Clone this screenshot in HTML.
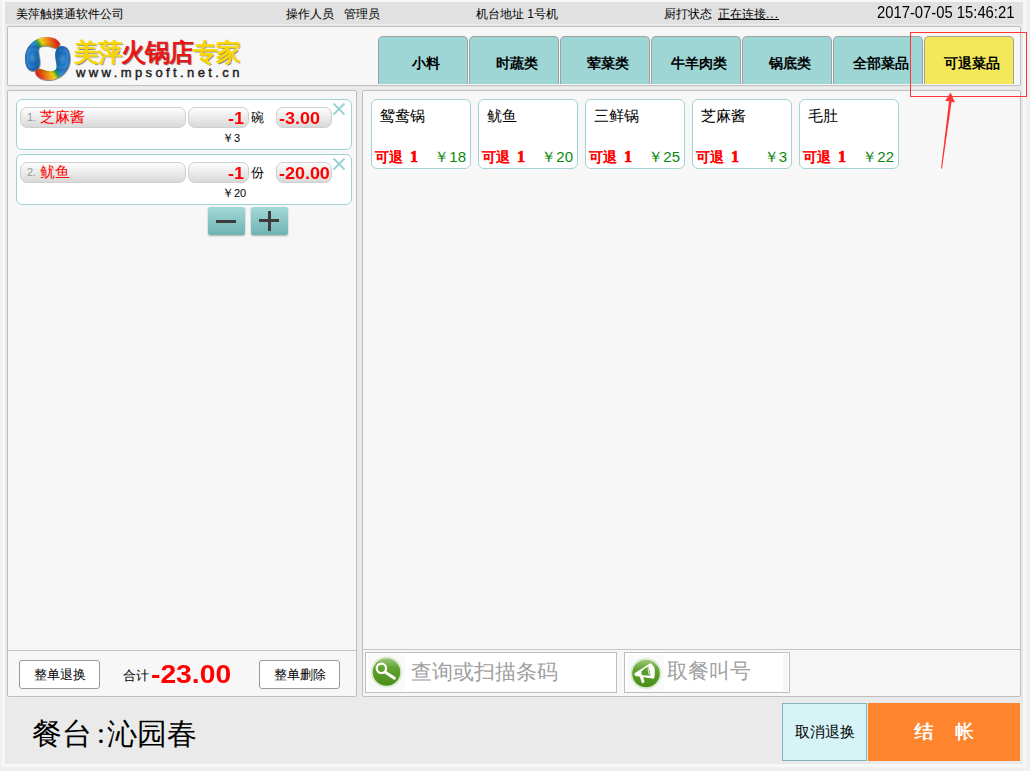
<!DOCTYPE html>
<html><head><meta charset="utf-8">
<style>
*{box-sizing:border-box;margin:0;padding:0}
html,body{width:1030px;height:771px;overflow:hidden;background:#f0f0f0;font-family:"Liberation Sans",sans-serif;color:#000}
.a{position:absolute}
#frame{left:2px;top:0;width:1024px;height:767px;background:#f7f7f7}
#inner{left:5px;top:2px;width:1018px;height:762px;background:#eaeaea}
#hbar{left:5px;top:2px;width:1018px;height:22px;background:#e1e1e1}
.ht{font-size:12px;line-height:14px;top:7px;white-space:nowrap}
.panel{background:#f7f7f7;border:1px solid #bebebe;border-radius:2px}
.tab{top:36px;width:90px;height:48px;background:#9ed6d6;border:1px solid #a0a0a0;border-bottom:none;border-radius:5px 5px 0 0;font-size:13.5px;font-weight:bold;text-align:center;line-height:54px;text-indent:6px}
.card{background:#fff;border:1px solid #a0d1d1;border-radius:6px}
.pill{background:linear-gradient(#fdfdfd,#e9e9e9 55%,#d9d9d9);border:1px solid #cfcfcf;border-radius:7px}
.red{color:#ff0000}
.dish{top:99px;width:100px;height:70px;background:#fff;border:1px solid #a5d3d3;border-radius:6px}
.dn{left:8px;top:8px;font-size:15px;line-height:16px;white-space:nowrap}
.dr{left:3px;top:50px;font-size:14px;line-height:14px;font-weight:bold;color:#ff0000;white-space:nowrap;text-shadow:0.35px 0 0 rgba(255,0,0,.5)}.dr b{font-family:"Liberation Serif",serif;font-size:16px;margin-left:7px;-webkit-text-stroke:0.6px #ff0000}
.dp{right:4px;top:50px;font-size:15px;line-height:14px;color:#0b870b;white-space:nowrap}
.btn{background:#fff;border:1px solid #9a9a9a;border-radius:3px;font-size:13px;text-align:center;line-height:27px}
</style></head><body>
<div class="a" id="frame"></div>
<div class="a" id="inner"></div>
<div class="a" id="hbar"></div>
<div class="a ht" style="left:16px">美萍触摸通软件公司</div>
<div class="a ht" style="left:286px">操作人员&nbsp;&nbsp;&nbsp;管理员</div>
<div class="a ht" style="left:476px">机台地址 1号机</div>
<div class="a ht" style="left:664px">厨打状态<span style="text-decoration:underline;margin-left:6px">正在连接<span style="letter-spacing:1px">...</span></span></div>
<div class="a ht" style="left:877px;font-size:16px;line-height:17px;top:4px;transform:scaleX(0.925);transform-origin:0 0">2017-07-05 15:46:21</div>

<!-- header panel -->
<div class="a panel" style="left:7px;top:26px;width:1014px;height:60px"></div>
<svg class="a" style="left:24px;top:36px" width="48" height="46" viewBox="-1 -1 48 46">
<defs>
<linearGradient id="lg" x1="4" y1="22" x2="34" y2="4" gradientUnits="userSpaceOnUse">
<stop offset="0" stop-color="#1670c6"/><stop offset="0.37" stop-color="#1a82d2"/><stop offset="0.45" stop-color="#1f9a40"/><stop offset="0.56" stop-color="#f2d20a"/><stop offset="0.74" stop-color="#f08510"/><stop offset="0.92" stop-color="#df2418"/>
</linearGradient>
<radialGradient id="rg" cx="8" cy="21" r="14" gradientUnits="userSpaceOnUse"><stop offset="0" stop-color="#fff" stop-opacity="0.22"/><stop offset="0.45" stop-color="#fff" stop-opacity="0"/><stop offset="0.8" stop-color="#002060" stop-opacity="0.22"/><stop offset="1" stop-color="#002060" stop-opacity="0"/></radialGradient>
<radialGradient id="rg2" cx="23" cy="21.5" r="23" gradientUnits="userSpaceOnUse"><stop offset="0.55" stop-color="#000" stop-opacity="0.18"/><stop offset="0.72" stop-color="#000" stop-opacity="0"/><stop offset="0.9" stop-color="#fff" stop-opacity="0.12"/><stop offset="1" stop-color="#000" stop-opacity="0.15"/></radialGradient>
<filter id="sh" x="-20%" y="-20%" width="140%" height="140%"><feDropShadow dx="0.6" dy="0.8" stdDeviation="0.6" flood-color="#000" flood-opacity="0.55"/></filter>
</defs>
<g filter="url(#sh)">
<g id="pc"><path id="pa" fill="url(#lg)" d="M7,34 C2.5,33.5 0,28 0,21.5 C0,10 9,0.5 21,0 C27,-0.3 33,2 34.5,6 C35.5,9.5 33,12 30,11.2 C26.5,10.2 23.5,8.8 19.5,8.8 C16.5,8.8 14,9.5 13.5,12 C12.8,15 14.8,20 14.8,25 C14.8,30.5 12,34.5 7,34 Z"/>
<path fill="url(#rg)" d="M7,34 C2.5,33.5 0,28 0,21.5 C0,10 9,0.5 21,0 C27,-0.3 33,2 34.5,6 C35.5,9.5 33,12 30,11.2 C26.5,10.2 23.5,8.8 19.5,8.8 C16.5,8.8 14,9.5 13.5,12 C12.8,15 14.8,20 14.8,25 C14.8,30.5 12,34.5 7,34 Z"/>
<path fill="url(#rg2)" d="M7,34 C2.5,33.5 0,28 0,21.5 C0,10 9,0.5 21,0 C27,-0.3 33,2 34.5,6 C35.5,9.5 33,12 30,11.2 C26.5,10.2 23.5,8.8 19.5,8.8 C16.5,8.8 14,9.5 13.5,12 C12.8,15 14.8,20 14.8,25 C14.8,30.5 12,34.5 7,34 Z"/></g>
<use href="#pc" transform="rotate(180 22.5 21.5)"/>
</g>
</svg>
<div class="a" style="left:74px;top:37px;font-size:25px;line-height:30px;font-weight:normal;white-space:nowrap;text-shadow:1px 1px 1px rgba(40,40,60,.75);letter-spacing:-1.3px"><span style="color:#f8d800;-webkit-text-stroke:0.9px #f8d800">美萍</span><span style="color:#e81414;-webkit-text-stroke:0.9px #e81414">火锅店</span><span style="color:#f8d800;-webkit-text-stroke:0.9px #f8d800">专家</span></div>
<div class="a" style="left:76px;top:65px;font-size:13px;line-height:16px;font-weight:normal;-webkit-text-stroke:0.45px #222;letter-spacing:3.4px;color:#222;white-space:nowrap">www.mpsoft.net.cn</div>

<!-- tabs -->
<div class="a tab" style="left:378px">小料</div>
<div class="a tab" style="left:469px">时蔬类</div>
<div class="a tab" style="left:560px">荤菜类</div>
<div class="a tab" style="left:651px">牛羊肉类</div>
<div class="a tab" style="left:742px">锅底类</div>
<div class="a tab" style="left:833px">全部菜品</div>
<div class="a tab" style="left:924px;background:#f2e85a">可退菜品</div>

<!-- left panel -->
<div class="a panel" style="left:7px;top:90px;width:350px;height:607px"></div>
<div class="a" style="left:8px;top:650px;width:348px;height:1px;background:#c4c4c4"></div>
<!-- order items -->
<div class="a card" style="left:16px;top:99px;width:336px;height:51px"></div>
<div class="a pill" style="left:20px;top:107px;width:166px;height:21px"></div>
<div class="a" style="left:27px;top:111px;font-size:11px;line-height:13px;color:#999">1.</div>
<div class="a red" style="left:40px;top:109px;font-size:15px;line-height:16px">芝麻酱</div>
<div class="a pill" style="left:188px;top:107px;width:61px;height:21px"></div>
<div class="a red" style="left:188px;top:109px;width:50px;text-align:right;font-size:16px;line-height:19px;font-weight:bold;transform:scaleX(1.12);transform-origin:0 0">-1</div>
<div class="a" style="left:251px;top:111px;font-size:13px;line-height:14px">碗</div>
<div class="a pill" style="left:276px;top:107px;width:56px;height:21px"></div>
<div class="a red" style="left:279px;top:109px;font-size:16px;line-height:20px;font-weight:bold;transform:scaleX(1.12);transform-origin:0 0">-3.00</div>
<div class="a" style="left:222px;top:132px;font-size:11px;line-height:13px"><span style="font-size:12px">￥</span>3</div>

<div class="a card" style="left:16px;top:154px;width:336px;height:51px"></div>
<div class="a pill" style="left:20px;top:162px;width:166px;height:21px"></div>
<div class="a" style="left:27px;top:166px;font-size:11px;line-height:13px;color:#999">2.</div>
<div class="a red" style="left:40px;top:164px;font-size:15px;line-height:16px">鱿鱼</div>
<div class="a pill" style="left:188px;top:162px;width:61px;height:21px"></div>
<div class="a red" style="left:188px;top:164px;width:50px;text-align:right;font-size:16px;line-height:19px;font-weight:bold;transform:scaleX(1.12);transform-origin:0 0">-1</div>
<div class="a" style="left:251px;top:166px;font-size:13px;line-height:14px">份</div>
<div class="a pill" style="left:276px;top:162px;width:56px;height:21px"></div>
<div class="a red" style="left:279px;top:164px;font-size:16px;line-height:20px;font-weight:bold;transform:scaleX(1.12);transform-origin:0 0">-20.00</div>
<div class="a" style="left:222px;top:187px;font-size:11px;line-height:13px"><span style="font-size:12px">￥</span>20</div>

<svg class="a" style="left:332px;top:102px" width="14" height="14" viewBox="0 0 14 14"><path d="M1.5 1.5L12.5 12.5M12.5 1.5L1.5 12.5" stroke="#9ad2d2" stroke-width="1.9" fill="none"/></svg>
<svg class="a" style="left:332px;top:157px" width="14" height="14" viewBox="0 0 14 14"><path d="M1.5 1.5L12.5 12.5M12.5 1.5L1.5 12.5" stroke="#9ad2d2" stroke-width="1.9" fill="none"/></svg>

<div class="a" style="left:208px;top:207px;width:37px;height:28px;border-radius:2px;background:linear-gradient(#a3d8d8,#6fb3b3);box-shadow:0 1px 2px rgba(0,0,0,.3)"></div>
<div class="a" style="left:216px;top:220px;width:20px;height:3px;background:#3c3c3c"></div>
<div class="a" style="left:251px;top:207px;width:37px;height:28px;border-radius:2px;background:linear-gradient(#a3d8d8,#6fb3b3);box-shadow:0 1px 2px rgba(0,0,0,.3)"></div>
<div class="a" style="left:259px;top:219px;width:20px;height:3px;background:#3c3c3c"></div>
<div class="a" style="left:268px;top:211px;width:3px;height:20px;background:#3c3c3c"></div>

<!-- left footer -->
<div class="a btn" style="left:19px;top:660px;width:81px;height:29px">整单退换</div>
<div class="a" style="left:123px;top:668px;font-size:13px;line-height:15px">合计</div>
<div class="a red" style="left:151px;top:660px;font-size:25px;line-height:28px;font-weight:bold;transform:scaleX(1.13);transform-origin:0 0">-23.00</div>
<div class="a btn" style="left:259px;top:660px;width:81px;height:29px">整单删除</div>

<!-- right panel -->
<div class="a panel" style="left:362px;top:90px;width:659px;height:607px"></div>
<div class="a" style="left:363px;top:649px;width:657px;height:1px;background:#c4c4c4"></div>
<div class="a dish" style="left:371px"><div class="a dn">鸳鸯锅</div><div class="a dr">可退<b>1</b></div><div class="a dp">￥18</div></div>
<div class="a dish" style="left:478px"><div class="a dn">鱿鱼</div><div class="a dr">可退<b>1</b></div><div class="a dp">￥20</div></div>
<div class="a dish" style="left:585px"><div class="a dn">三鲜锅</div><div class="a dr">可退<b>1</b></div><div class="a dp">￥25</div></div>
<div class="a dish" style="left:692px"><div class="a dn">芝麻酱</div><div class="a dr">可退<b>1</b></div><div class="a dp">￥3</div></div>
<div class="a dish" style="left:799px"><div class="a dn">毛肚</div><div class="a dr">可退<b>1</b></div><div class="a dp">￥22</div></div>

<!-- search -->
<div class="a" style="left:365px;top:652px;width:252px;height:41px;background:#fff;border:1px solid #bdbdbd"></div>
<div class="a" style="left:411px;top:659px;font-size:21px;line-height:25px;color:#a0a0a0">查询或扫描条码</div>
<div class="a" style="left:624px;top:652px;width:166px;height:41px;background:#fff;border:1px solid #bdbdbd"></div>
<div class="a" style="left:783px;top:654px;width:5px;height:37px;background:#f5f5f5"></div>
<div class="a" style="left:667px;top:658px;font-size:21px;line-height:25px;color:#a0a0a0">取餐叫号</div>

<!-- bottom -->
<div class="a" style="left:32px;top:716px;font-size:30px;line-height:36px;font-family:'Liberation Serif',serif">餐台<span style="display:inline-block;width:15px;text-align:center;font-weight:normal;position:relative;left:1.5px;top:-1px">:</span>沁园春</div>
<div class="a" style="left:782px;top:703px;width:85px;height:58px;background:#d6f3f6;border:1px solid #86b3b9;font-size:15px;line-height:56px;text-align:center">取消退换</div>
<div class="a" style="left:868px;top:703px;width:152px;height:58px;background:#fe852e;color:#fff;font-size:19px;font-weight:normal;text-shadow:0.4px 0 0 #fff;line-height:58px;text-align:center">结&nbsp;&nbsp;&nbsp;&nbsp;帐</div>


<!-- search icons -->
<svg class="a" style="left:368px;top:654px" width="37" height="37" viewBox="0 0 37 37">
<defs><linearGradient id="gg" x1="0" y1="0" x2="0" y2="1"><stop offset="0" stop-color="#9ac77a"/><stop offset="0.35" stop-color="#62a330"/><stop offset="1" stop-color="#4a8c18"/></linearGradient></defs>
<rect x="0" y="0" width="37" height="37" fill="#fafafa"/>
<circle cx="18.5" cy="18" r="14.8" fill="none" stroke="#cfe5c0" stroke-width="1.6" opacity="0.8"/>
<circle cx="18.5" cy="18" r="13.8" fill="url(#gg)"/>
<circle cx="13.4" cy="14.3" r="4.7" fill="none" stroke="#fff" stroke-width="2.2"/>
<path d="M17 18 L26.5 24.2" stroke="#fff" stroke-width="3" stroke-linecap="round"/>
</svg>
<svg class="a" style="left:627px;top:655px" width="37" height="37" viewBox="0 0 37 37">
<rect x="0" y="0" width="37" height="37" fill="#fafafa"/>
<circle cx="19" cy="18.5" r="14.8" fill="none" stroke="#cfe5c0" stroke-width="1.6" opacity="0.8"/>
<circle cx="19" cy="18.5" r="13.8" fill="url(#gg)"/>
<path d="M7.6 18.2 L23.7 7.9 Q28 12 27.8 15.5 Q28 20 27 23.7 L8.4 21 Q7 19.8 7.6 18.2 Z" fill="#fff"/>
<path d="M12.6 20.8 L16 21 L17.6 27.2 L15 28.2 Z" fill="#fff"/>
<path d="M14.5 16.5 Q17 13.5 21.5 11.5 L23.8 20.5 Q19 20.5 15.2 20.2 Q13.8 18.5 14.5 16.5 Z" fill="#5a9e2a"/>
<ellipse cx="22.6" cy="16" rx="1.3" ry="3.6" fill="none" stroke="#fff" stroke-width="0.9" transform="rotate(-10 22.6 16)"/>
</svg>

<!-- annotation -->
<div class="a" style="left:910px;top:32px;width:117px;height:65px;border:1px solid #ff3434"></div>
<svg class="a" style="left:930px;top:88px" width="30" height="84" viewBox="930 88 30 84">
<path d="M941 168.5 L949.2 100 L951.8 100.3 L942 168.5 Z" fill="#ff3434"/>
<path d="M950.6 92.4 L955 102.6 L945.3 100.8 Z" fill="#ff3434"/>
</svg>
</body></html>
